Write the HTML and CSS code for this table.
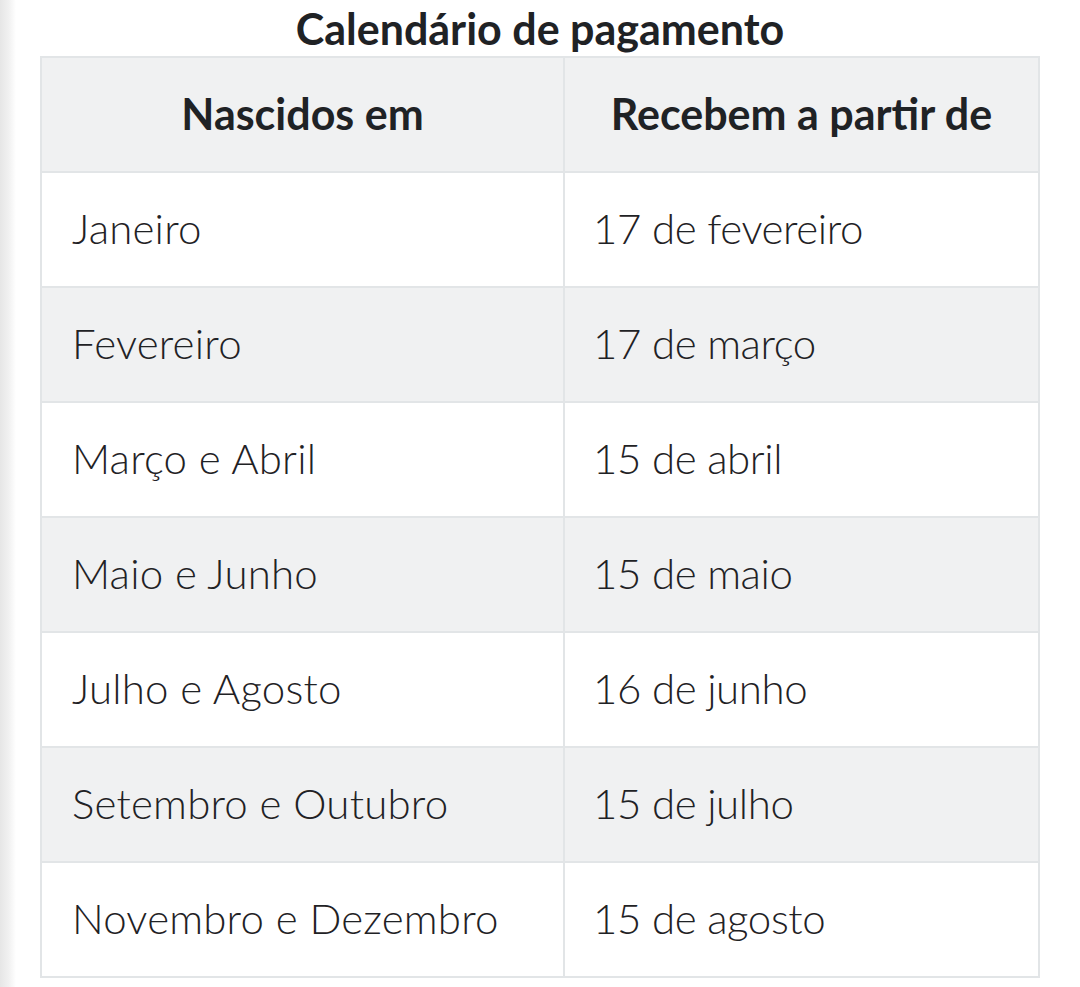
FILE: index.html
```html
<!DOCTYPE html>
<html lang="pt">
<head>
<meta charset="utf-8">
<link rel="stylesheet" href="styles.css">
</head>
<body>
<div class="page">
  <div class="edge"></div>
  <main class="content">
    <h2 class="title">Calendário de pagamento</h2>
    <table class="calendar">
      <thead>
        <tr><th class="col-a">Nascidos em</th><th class="col-b">Recebem a partir de</th></tr>
      </thead>
      <tbody>
        <tr><td>Janeiro</td><td>17 de fevereiro</td></tr>
        <tr><td>Fevereiro</td><td>17 de março</td></tr>
        <tr><td>Março e Abril</td><td>15 de abril</td></tr>
        <tr><td>Maio e Junho</td><td>15 de maio</td></tr>
        <tr><td>Julho e Agosto</td><td>16 de junho</td></tr>
        <tr><td>Setembro e Outubro</td><td>15 de julho</td></tr>
        <tr><td>Novembro e Dezembro</td><td>15 de agosto</td></tr>
      </tbody>
    </table>
  </main>
</div>
</body>
</html>
```

FILE: styles.css
```css
html, body {
  margin: 0;
  padding: 0;
  background: #ffffff;
}
body {
  font-family: Lato, "Open Sans", "Liberation Sans", sans-serif;
  color: #1f2225;
}
.page {
  display: flex;
  width: 1080px;
  height: 987px;
  overflow: hidden;
}
.edge {
  width: 16px;
  flex: none;
  background: linear-gradient(to right, #e6e6e6 0%, #f1f1f1 55%, #ffffff 100%);
}
.content {
  flex: 1;
  display: flex;
  flex-direction: column;
  align-items: center;
  padding-left: 24px;
  padding-right: 40px;
}
.title {
  margin: 0;
  font-size: 43px;
  font-weight: 700;
  line-height: 56px;
  height: 56px;
  white-space: nowrap;
  transform: translateY(1px);
}
.calendar {
  width: 1000px;
  border-collapse: collapse;
  table-layout: fixed;
  border: 2px solid #e2e5e7;
}
.calendar th,
.calendar td {
  border: 2px solid #e2e5e7;
  height: 109px;
  padding: 0 0 4px 30px;
  vertical-align: middle;
  text-align: left;
  font-size: 42px;
  font-weight: 300;
  letter-spacing: 0.2px;
  white-space: nowrap;
}
.calendar td + td {
  padding-left: 28px;
  letter-spacing: -0.4px;
}
.calendar th {
  background: #f0f1f2;
  font-weight: 700;
  text-align: center;
  height: 111px;
  padding: 0 0 2px 0;
  font-size: 43px;
  letter-spacing: 0;
}
.col-a { width: 521px; }
.calendar tbody tr:nth-child(even) td {
  background: #f0f1f2;
}
```
